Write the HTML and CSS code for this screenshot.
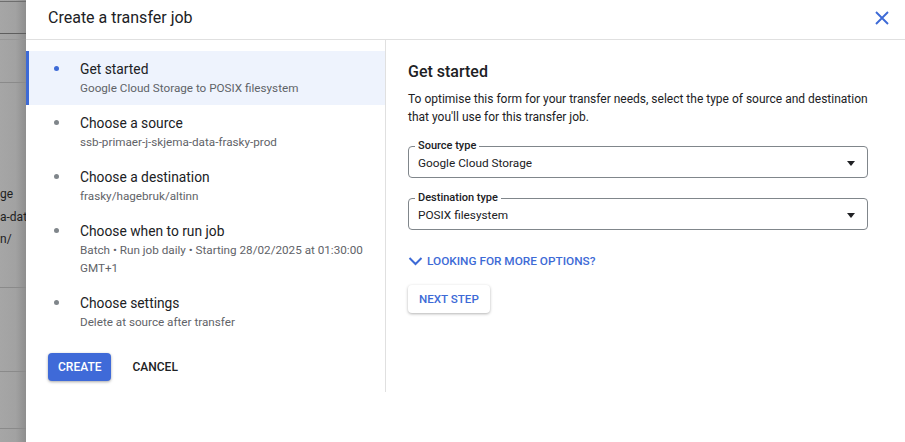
FILE: index.html
```html
<!DOCTYPE html>
<html>
<head>
<meta charset="utf-8">
<link rel="stylesheet" href="styles.css">
</head>
<body>
<div class="page">
  <div class="backdrop">
    <div class="bg-row r1"></div>
    <div class="bg-row r2"></div>
    <div class="bg-row r3"></div>
    <div class="bg-row r3b"></div>
    <div class="bg-row r4">
      <div class="bg-text">ge</div>
      <div class="bg-text">a-dat</div>
      <div class="bg-text">n/</div>
    </div>
    <div class="bg-row r5"></div>
    <div class="bg-row r6"></div>
    <div class="bg-row r7"></div>
  </div>
  <div class="dialog">
    <div class="header">
      <div class="title">Create a transfer job</div>
      <svg class="close" width="14" height="14" viewBox="0 0 14 14"><path d="M1 1 L13 13 M13 1 L1 13" stroke="#3d6ad6" stroke-width="1.9" fill="none"/></svg>
    </div>
    <div class="body">
      <div class="steps">
        <div class="step active">
          <span class="dot"></span>
          <div class="step-title">Get started</div>
          <div class="step-sub">Google Cloud Storage to POSIX filesystem</div>
        </div>
        <div class="step">
          <span class="dot"></span>
          <div class="step-title">Choose a source</div>
          <div class="step-sub">ssb-primaer-j-skjema-data-frasky-prod</div>
        </div>
        <div class="step">
          <span class="dot"></span>
          <div class="step-title">Choose a destination</div>
          <div class="step-sub">frasky/hagebruk/altinn</div>
        </div>
        <div class="step">
          <span class="dot"></span>
          <div class="step-title">Choose when to run job</div>
          <div class="step-sub">Batch • Run job daily • Starting 28/02/2025 at 01:30:00 GMT+1</div>
        </div>
        <div class="step">
          <span class="dot"></span>
          <div class="step-title">Choose settings</div>
          <div class="step-sub">Delete at source after transfer</div>
        </div>
        <div class="actions">
          <button class="btn-primary">CREATE</button>
          <button class="btn-text">CANCEL</button>
        </div>
      </div>
      <div class="content">
        <h2 class="heading">Get started</h2>
        <p class="desc">To optimise this form for your transfer needs, select the type of source and destination that you'll use for this transfer job.</p>
        <div class="field">
          <span class="field-label">Source type</span>
          <span class="field-value">Google Cloud Storage</span>
          <span class="caret"></span>
        </div>
        <div class="field">
          <span class="field-label">Destination type</span>
          <span class="field-value">POSIX filesystem</span>
          <span class="caret"></span>
        </div>
        <div class="more">
          <svg width="15" height="10" viewBox="0 0 15 10"><path d="M1.5 2 L7.5 8 L13.5 2" stroke="#3d6ad6" stroke-width="2" fill="none"/></svg>
          <span>LOOKING FOR MORE OPTIONS?</span>
        </div>
        <button class="btn-raised">NEXT STEP</button>
      </div>
    </div>
  </div>
</div>
</body>
</html>
```

FILE: styles.css
```css
* { box-sizing: border-box; }
html, body { margin: 0; padding: 0; }
body {
  font-family: Roboto, "Liberation Sans", Arial, sans-serif;
  color: #202124;
  background: #fff;
  width: 905px;
  height: 442px;
  overflow: hidden;
}
.page { display: flex; height: 442px; }

.backdrop {
  width: 26px;
  flex: none;
  overflow: hidden;
  background: linear-gradient(to right, #a6a6a6 0%, #a2a2a2 60%, #8e8e8e 100%);
  display: flex;
  flex-direction: column;
}
.bg-row { border-bottom: 1px solid #8a8a8a; flex: none; }
.r1 { height: 2px; border-bottom-color: #6e6e6e; }
.r2 { height: 32px; border-bottom-color: #5e5e5e; }
.r3 { height: 6px; border-bottom-color: #979797; }
.r3b { height: 43px; }
.r4 { height: 205px; padding-top: 100px; }
.r5 { height: 84px; }
.r6 { height: 57px; }
.r7 { flex: 1; border-bottom: 0; }
.bg-text {
  font-size: 12px;
  line-height: 22.5px;
  color: #1e1e1e;
  white-space: nowrap;
}

.dialog {
  flex: 1;
  display: flex;
  flex-direction: column;
  background: #fff;
}
.header {
  height: 40px;
  border-bottom: 1px solid #e0e0e0;
  display: flex;
  align-items: center;
  padding: 0 16px 0 22px;
  flex: none;
}
.title {
  font-size: 16px;
  flex: 1;
  padding-bottom: 4px;
}
.close { margin-bottom: 3px; }

.body { display: flex; align-items: flex-start; }
.steps {
  width: 360px;
  flex: none;
  border-right: 1px solid #e0e0e0;
  padding: 11px 0 11px 0;
}
.step {
  position: relative;
  padding: 8px 6px 8px 54px;
  border-left: 3px solid transparent;
}
.step.active {
  background: #eef3fd;
  border-left-color: #3d6ad6;
}
.dot {
  position: absolute;
  left: 25px;
  top: 15px;
  width: 5px;
  height: 5px;
  border-radius: 50%;
  background: #80868b;
}
.step.active .dot { background: #3d6ad6; }
.step-title {
  font-size: 13.8px;
  line-height: 20px;
  color: #202124;
  margin-left: -3px;
}
.step-sub {
  font-size: 11.7px;
  line-height: 18px;
  color: #5f6368;
  margin-left: -3px;
}
.actions {
  display: flex;
  gap: 11px;
  padding: 14px 0 0 22px;
}
button {
  font-family: inherit;
  font-size: 12px;
  font-weight: 500;
  height: 28px;
  padding: 0 10px;
  border: 0;
  border-radius: 4px;
  cursor: pointer;
}
.btn-primary {
  background: #3f6ad8;
  color: #fff;
  box-shadow: 0 1px 3px rgba(0,0,0,.35);
}
.btn-text {
  background: transparent;
  color: #202124;
}

.content {
  flex: 1;
  display: flex;
  flex-direction: column;
  padding: 20px 37px 0 22px;
}
.heading {
  margin: 0;
  font-size: 16px;
  font-weight: 500;
  line-height: 24px;
}
.desc {
  margin: 6px 0 20px;
  font-size: 12px;
  line-height: 18px;
  color: #202124;
}
.field {
  position: relative;
  height: 32px;
  border: 1px solid #80868b;
  border-radius: 4px;
  display: flex;
  align-items: center;
  padding: 0 12px 0 9px;
  margin-bottom: 20px;
}
.field-label {
  position: absolute;
  top: -8px;
  left: 6px;
  padding: 0 3px;
  background: #fff;
  font-size: 11px;
  font-weight: 500;
  line-height: 14px;
  color: #202124;
}
.field-value {
  flex: 1;
  font-size: 11.8px;
  padding-top: 2px;
}
.caret {
  width: 0; height: 0;
  border-left: 4.5px solid transparent;
  border-right: 4.5px solid transparent;
  border-top: 5px solid #202124;
  margin-top: 2px;
}
.more {
  align-self: flex-start;
  display: flex;
  align-items: center;
  gap: 4px;
  color: #3d6ad6;
  font-size: 11.8px;
  font-weight: 500;
  margin-top: 2px;
  height: 18px;
}
.btn-raised {
  align-self: flex-start;
  margin-top: 15px;
  background: #fff;
  color: #3d6ad6;
  box-shadow: 0 1px 3px rgba(0,0,0,.3);
  font-size: 11.6px;
  padding: 0 11px;
}
```
